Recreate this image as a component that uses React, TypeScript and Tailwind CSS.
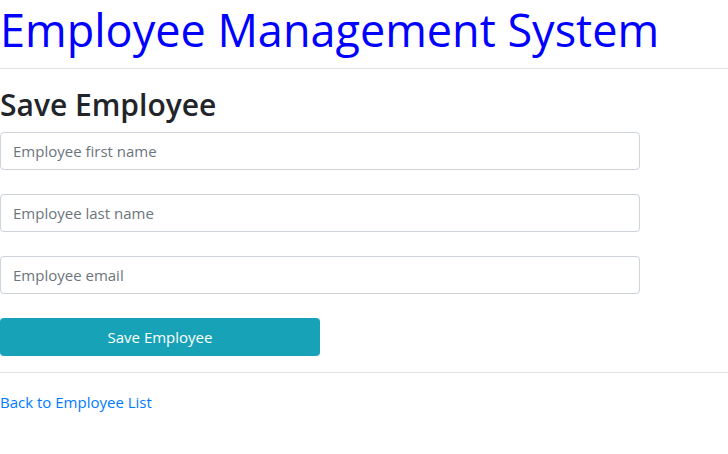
export default function App() {
  return (
    <div className="min-h-screen bg-white font-['Open_Sans',sans-serif] text-[#212529]">
      <h1 className="text-[45px] leading-[60px] text-[#0000ff] mb-[8px]">Employee Management System</h1>
      <hr className="border-0 border-t border-[#e2e2e2]" />
      <div className="mt-[17px]">
        <h2 className="text-[30px] leading-[38px] font-semibold mb-[8px]">Save Employee</h2>
        <form className="w-[640px] flex flex-col gap-[24px]">
          <input
            type="text"
            placeholder="Employee first name"
            className="h-[38px] px-[12px] text-[15px] border border-[#ced4da] rounded-[4px] placeholder:text-[#6c757d] outline-none"
          />
          <input
            type="text"
            placeholder="Employee last name"
            className="h-[38px] px-[12px] text-[15px] border border-[#ced4da] rounded-[4px] placeholder:text-[#6c757d] outline-none"
          />
          <input
            type="email"
            placeholder="Employee email"
            className="h-[38px] px-[12px] text-[15px] border border-[#ced4da] rounded-[4px] placeholder:text-[#6c757d] outline-none"
          />
          <button
            type="button"
            className="w-[320px] h-[38px] bg-[#17a2b8] text-white text-[15px] rounded-[4px]"
          >
            Save Employee
          </button>
        </form>
      </div>
      <hr className="border-0 border-t border-[#e2e2e2] mt-[16px]" />
      <div className="mt-[17px]">
        <a href="#" className="text-[15px] leading-[24px] text-[#007bff]">
          Back to Employee List
        </a>
      </div>
    </div>
  );
}
